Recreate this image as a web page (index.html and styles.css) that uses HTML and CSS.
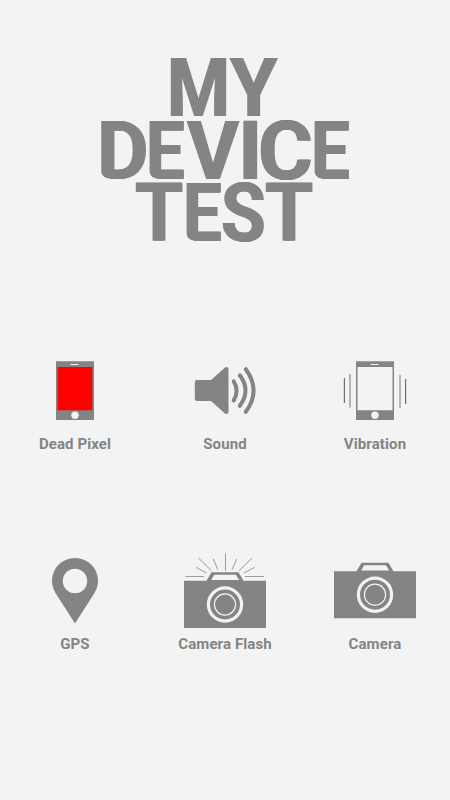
FILE: index.html
```html
<!DOCTYPE html>
<html lang="en">
<head>
<meta charset="utf-8">
<title>My Device Test</title>
<link rel="stylesheet" href="styles.css">
</head>
<body>
<h1 class="title">
<span class="line line-my"><span class="l m">M</span><span class="l y">Y</span></span>
<span class="line line-device"><span class="l d round">D</span><span class="l e round">E</span><span class="l v">V</span><span class="l i">I</span><span class="l c">C</span><span class="l e round">E</span></span>
<span class="line line-test"><span class="l t">T</span><span class="l e e-test round">E</span><span class="l s">S</span><span class="l t">T</span></span>
</h1>
<main class="grid">
<div class="item">
<svg class="icon" viewBox="0 350 150 80"><path class="fill" d="M56 361.3h38v58.7H56z"/><path fill="#f00" d="M57.6 367h34.7v43.2H57.6z"/><path class="line-light" stroke-width="1" d="M70.5 364.5h8"/><circle class="light" cx="75" cy="415.2" r="3.7"/></svg>
<span class="label">Dead Pixel</span>
</div>
<div class="item">
<svg class="icon" viewBox="150 350 150 80"><path class="fill" d="M197 380h14l14-12.5q3-1.5 3.5 1.5v43q-.5 3-3.500 1.500L211 401h-14q-2.200 0-2.200-2.200v-16.600q0-2.200 2.200-2.200z"/><g class="stroke" stroke-width="4" stroke-linecap="round"><path d="M233.700 381.300Q239.500 390.800 233.700 400.500"/><path d="M239.800 375.300Q251.200 390.500 239.800 405.800"/><path d="M245.800 369.200Q261.300 390.500 245.800 411.800"/></g></svg>
<span class="label">Sound</span>
</div>
<div class="item">
<svg class="icon" viewBox="300 350 150 80"><path class="fill" d="M356 361.3h38v58.7h-38z"/><path class="light" d="M357.500 367h35v43.200h-35z"/><path class="line-light" stroke-width="1" d="M370.500 364.500h8"/><circle class="light" cx="375" cy="415.200" r="3.700"/><path stroke="#6d6d6d" stroke-width="1.200" d="M344.400 378v25M405.600 379v25"/><path stroke="#aaa" stroke-width="1.700" d="M350 374v33.500M400 375v33"/></svg>
<span class="label">Vibration</span>
</div>
<div class="item">
<svg class="icon" viewBox="0 550 150 80"><path class="fill" fill-rule="evenodd" d="M75 623.500L55.500 593Q52 587 52 580.500A23 22.500 0 0 1 98 580.500Q98 587 94.500 593zM75 568.800a12.200 12.200 0 1 0 0 24.400a12.200 12.200 0 1 0 0-24.400z"/></svg>
<span class="label">GPS</span>
</div>
<div class="item">
<svg class="icon" viewBox="150 550 150 80"><path class="fill" d="M184 580.700h22.500l5-8.500h27l5 8.500H266v47.300h-82z"/><path class="light" d="M214.200 574.800h21.600l3.400 5.200h-28z"/><circle class="light" cx="225" cy="604.500" r="18.200"/><circle class="fill" cx="225" cy="604.500" r="15"/><circle class="line-light" stroke-width="1.200" cx="225" cy="604.500" r="10.600"/><path class="stroke" stroke-width=".8" d="M225.500 553.500v17.500M185.500 576.500H204M245 576.500H264M196 567.300l10.500 5.700M198.500 558l13 12.800M213.300 559l4.500 10.500M236.700 559l-4.500 10.500M252 558l-13 12.800M254.500 567.300L244 573"/></svg>
<span class="label">Camera Flash</span>
</div>
<div class="item">
<svg class="icon" viewBox="300 550 150 80"><path class="fill" d="M334 571.200h22.500l5-8.500h27l5 8.500H416v47h-82z"/><path class="light" d="M364.200 565.200h21.600l3.400 5.200h-28z"/><circle class="light" cx="375" cy="594.700" r="18.200"/><circle class="fill" cx="375" cy="594.700" r="15"/><circle class="line-light" stroke-width="1.200" cx="375" cy="594.700" r="10.600"/></svg>
<span class="label">Camera</span>
</div>
</main>
</body>
</html>
```
FILE: styles.css
```css
body {
  margin: 0;
  width: 450px;
  height: 800px;
  overflow: hidden;
  background: #f3f3f3;
  color: #848484;
  font-family: Roboto, sans-serif;
}
.title {
  margin: 0;
  padding-top: 57.2px;
  box-sizing: border-box;
  height: 350px;
  font-size: 81.4px;
  line-height: 62.5px;
  font-weight: 700;
  text-shadow: .8px 0 #848484, -.8px 0 #848484;
}
.line {
  display: block;
  height: 62.5px;
  white-space: nowrap;
}
.line-my { padding-left: 167.1px; }
.line-device { padding-left: 97px; }
.line-test { padding-left: 135.3px; }
.l {
  position: relative;
  display: inline-block;
  height: 62.5px;
  vertical-align: top;
  transform-origin: 0 0;
}
.m { width: 63.4px; transform: scaleX(.885); }
.y { width: 49px; transform: scaleX(.94); }
.d { width: 49.1px; transform: scaleX(.975); }
.e { width: 41.3px; transform: scaleX(.845); }
.e-test { width: 37.9px; }
.v { width: 51px; transform: scaleX(.98); }
.i { width: 19.3px; transform: scaleX(1.03); }
.c { width: 53.4px; transform: scaleX(1.03); }
.t { width: 47.5px; transform: scaleX(.955); }
.s { width: 44.6px; transform: scaleX(.893); }
.round::after {
  content: "";
  position: absolute;
  left: 3px;
  top: 49px;
  width: 10px;
  height: 10px;
  background: radial-gradient(circle at 100% 0, transparent 9.2px, #f3f3f3 9.8px);
}
.grid {
  display: grid;
  grid-template-columns: repeat(3, 150px);
  grid-auto-rows: 200px;
}
.item {
  display: flex;
  flex-direction: column;
  align-items: center;
}
.icon {
  width: 150px;
  height: 80px;
  fill: none;
}
.fill { fill: #848484; }
.light { fill: #f3f3f3; }
.stroke { stroke: #848484; }
.line-light { stroke: #f3f3f3; }
circle.line-light { fill: none; }
.label {
  margin: 4px 0 0;
  font-size: 15px;
  line-height: 20px;
  font-weight: 700;
  letter-spacing: .1px;
  white-space: nowrap;
}
```
